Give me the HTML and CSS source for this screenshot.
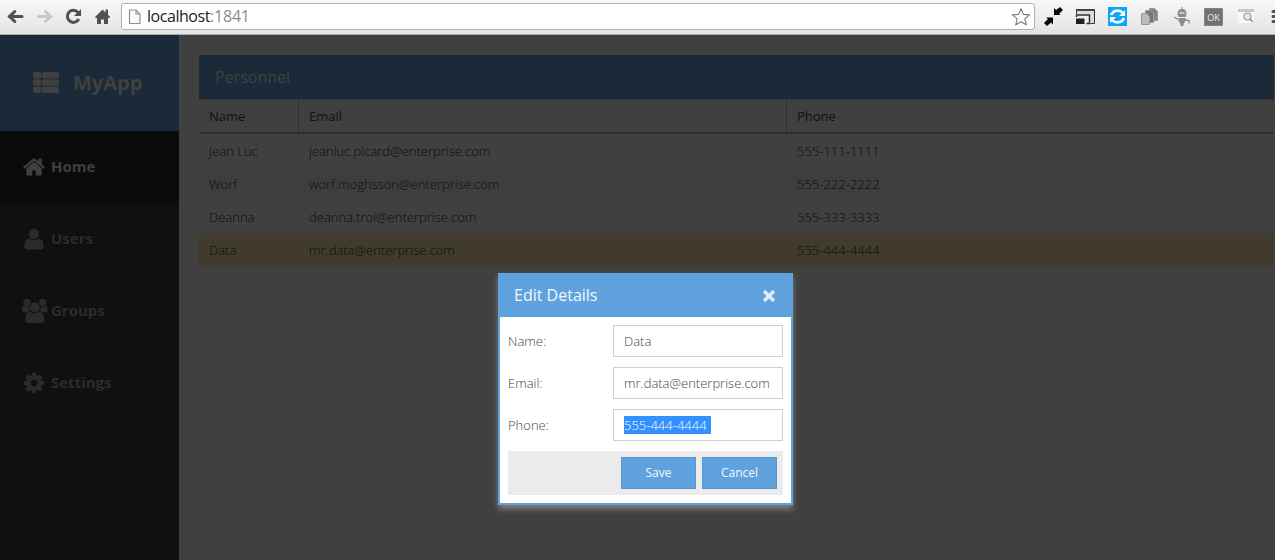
FILE: index.html
```html
<!DOCTYPE html>
<html lang="en">
<head>
<meta charset="utf-8">
<title>MyApp</title>
<link rel="stylesheet" href="styles.css">
</head>
<body>
<header class="toolbar">
  <svg class="nav-icons" width="121" height="34" viewBox="0 0 121 34">
    <g fill="none" stroke-width="3">
      <path d="M9.5 16.5H22" stroke="#505050" stroke-linecap="round"/><path d="M14.8 11.500L9.5 16.5l5.300 5" stroke="#505050" stroke-linecap="round"/>
      <path d="M38.500 16.500H50M45.500 11.500l5.300 5-5.300 5" stroke="#c8c8c8" stroke-linecap="round"/>
      <path d="M78 12.500A6 6 0 1 0 78.800 19" stroke="#505050"/>
    </g>
    <path d="M81 9v7h-7z" fill="#505050"/>
    <path d="M95 17l7.500-7.500 3 3V9.500h2.500v5.300l2.200 2.200-1 1H108v6h-4v-4.500h-3V24h-4v-6h-1.500z" fill="#505050"/>
  </svg>
  <div class="address">
    <svg width="14" height="18" viewBox="0 0 14 18"><path d="M1.500 2H8l4 4v9.500H1.500zM8 2v4h4" fill="#fafafa" stroke="#909090" stroke-width="1.200"/></svg>
    <span class="url">localhost<span class="port">:1841</span></span>
    <svg class="star" width="20" height="20" viewBox="0 0 20 20"><path d="M10 1.700l2.400 5.700 6.100.5-4.700 4 1.500 6L10 14.700l-5.300 3.200 1.500-6-4.700-4 6.100-.5z" fill="#fff" stroke="#777" stroke-width="1.100" stroke-linejoin="round"/></svg>
  </div>
  <svg class="extensions" width="240" height="34" viewBox="0 0 240 34">
    <g fill="#080808"><path d="M19 15v-7l2 2 4-3 3 3-4 4 2 1zM18 17.500v7l-2-2-4 3.500-3-3 4-4-2-1.500z"/></g>
    <path d="M41.500 14.500v-5h18v14h-4" fill="none" stroke="#303030"/><path d="M41 9h19v2H41z" fill="#444"/><path d="M42 11h17v12h-3v-9H42z" fill="#ddd"/><path d="M41.500 15h13v8.500h-3M41.500 15v2" fill="none" stroke="#303030" stroke-width="1.500"/><path d="M41 18.500h8.500v5.500H41z" fill="#202020"/>
    <path d="M73 7h19v19H73z" fill="#0ba5fc"/><path d="M76 15a7 6.500 0 0 1 12-2M89 18a7 6.500 0 0 1-12 2" fill="none" stroke="#fff" stroke-width="2.600"/><path d="M90 10v6h-6zM75 23v-6h6z" fill="#fff"/>
    <g stroke="#999"><path d="M114.500 8.500h5l3 3v9h-8z" fill="#858585"/><path d="M110.500 10.500h5l3 3v9h-8z" fill="#777"/><path d="M106.500 13.500h5l3 3v8h-8z" fill="#bbb"/></g>
    <g fill="#8c8c8c"><path d="M146.500 7h1v3h-1z"/><path d="M142.500 14q0-5 4.500-5t4.500 5z"/><path d="M142.500 14h9l-1 3h-7zM143.500 18h7v3l-2 3v2h-3v-2l-2-3z"/><path d="M139 17l4 2.500M150 20l4 .5v3" fill="none" stroke="#8c8c8c" stroke-width="1.300"/></g><path d="M144.500 13h5" stroke="#ddd" stroke-width="1.500"/>
    <path d="M169.500 8.500h18v17h-18z" fill="#727272" stroke="#858585"/><text x="178.500" y="20.500" text-anchor="middle" class="ok">OK</text>
    <path d="M203 10h16v13h-16z" fill="#f8f8f8"/><path d="M203 9h16v3h-16z" fill="#c6c6c6"/><circle cx="212.500" cy="16.500" r="3.500" fill="#e8e8e8" stroke="#999" stroke-width="1.200"/><path d="M215 19l3 3" stroke="#909090" stroke-width="1.500"/>
    <path d="M238 11.500h5M238 16.500h5M238 21.500h5" stroke="#505050" stroke-width="3" stroke-linecap="round"/>
  </svg>
</header>
<div class="app">
  <nav class="sidebar">
    <div class="brand"><svg width="26" height="22" viewBox="0 0 26 22" fill="#404040"><rect width="8.300" height="6.500" rx="1.700"/><rect x="9" width="17" height="6.500" rx="1.700"/><rect y="7.200" width="8.300" height="6.500" rx="1.700"/><rect x="9" y="7.200" width="17" height="6.500" rx="1.700"/><rect y="14.400" width="8.300" height="6.500" rx="1.700"/><rect x="9" y="14.400" width="17" height="6.500" rx="1.700"/></svg><span>MyApp</span></div>
    <a class="item active"><svg viewBox="0 0 1792 1792"><path d="M1472 992v480q0 26-19 45t-45 19h-384v-384h-256v384h-384q-26 0-45-19t-19-45v-480q0-1 .5-3t.5-3l575-474 575 474q1 2 1 6zm223-69l-62 74q-8 9-21 11h-3q-13 0-21-7l-692-577-692 577q-12 8-24 7-13-2-21-11l-62-74q-8-10-7-23.500t11-21.500l719-599q32-26 76-26t76 26l244 204v-195q0-14 9-23t23-9h192q14 0 23 9t9 23v408l219 182q10 8 11 21.500t-7 23.500z"/></svg>Home</a>
    <a class="item"><svg viewBox="0 0 24 24"><circle cx="12" cy="7" r="5.200"/><path d="M7.300 11.400q4.700 3.600 9.400 0Q21.600 12 21.600 19q0 3.500-3 3.500H5.400q-3 0-3-3.500 0-7 4.900-7.600z"/></svg>Users</a>
    <a class="item"><svg class="wide" viewBox="0 0 26 26"><circle cx="5" cy="4.300" r="3.600"/><circle cx="20.700" cy="4.300" r="3.600"/><path d="M3 7.500q2 1.500 4 .7-.3 3 1.600 5Q6 13 5 14.500H2q-2 0-2-2Q0 7 3 7.500zM22.700 7.500q-2 1.500-4 .7.300 3-1.600 5 2.600-.2 3.600 1.300h3q2 0 2-2 0-5.500-3-5z"/><circle cx="12.800" cy="9.400" r="5"/><path d="M8.200 13.600q4.600 3.500 9.200 0Q22 14 22.300 21.500q0 3.500-3 3.500h-13q-3 0-3-3.500Q3.500 14 8.200 13.600z"/></svg>Groups</a>
    <a class="item"><svg viewBox="0 0 1792 1792"><path d="M1152 896q0-106-75-181t-181-75-181 75-75 181 75 181 181 75 181-75 75-181zm512-109v222q0 12-8 23t-20 13l-185 28q-19 54-39 91 35 50 107 138 10 12 10 25t-9 23q-27 37-99 108t-94 71q-12 0-26-9l-138-108q-44 23-91 38-16 136-29 186-7 28-36 28h-222q-14 0-24.500-8.500t-11.500-21.500l-28-184q-49-16-90-37l-141 107q-10 9-25 9-14 0-25-11-126-114-165-168-7-10-7-23 0-12 8-23 15-21 51-66.500t54-70.500q-27-50-41-99l-183-27q-13-2-21-12.500t-8-23.500v-222q0-12 8-23t19-13l186-28q14-46 39-92-40-57-107-138-10-12-10-24 0-10 9-23 26-36 98.500-107.500t94.500-71.500q13 0 26 10l138 107q44-23 91-38 16-136 29-186 7-28 36-28h222q14 0 24.500 8.500t11.500 21.500l28 184q49 16 90 37l142-107q9-9 24-9 13 0 25 10 129 119 165 170 7 8 7 22 0 12-8 23-15 21-51 66.500t-54 70.500q26 50 41 98l183 28q13 2 21 12.500t8 23.500z"/></svg>Settings</a>
  </nav>
  <main class="content">
    <h1 class="panel-title">Personnel</h1>
    <div class="row head"><span>Name</span><span>Email</span><span>Phone</span></div>
    <div class="row"><span>Jean Luc</span><span>jeanluc.picard@enterprise.com</span><span>555-111-1111</span></div>
    <div class="row alt"><span>Worf</span><span>worf.moghsson@enterprise.com</span><span>555-222-2222</span></div>
    <div class="row"><span>Deanna</span><span>deanna.troi@enterprise.com</span><span>555-333-3333</span></div>
    <div class="row selected"><span>Data</span><span>mr.data@enterprise.com</span><span>555-444-4444</span></div>
  </main>
</div>
<section class="dialog">
  <div class="dialog-head"><span>Edit Details</span><svg width="12" height="12" viewBox="0 0 12 12"><path d="M2.300 2.300l7.400 7.400M9.700 2.300L2.300 9.700" stroke="#dfecf8" stroke-width="3.500" stroke-linecap="square"/></svg></div>
  <div class="form">
    <div class="field"><label>Name:</label><div class="input">Data</div></div>
    <div class="field"><label>Email:</label><div class="input">mr.data@enterprise.com</div></div>
    <div class="field"><label>Phone:</label><div class="input"><span class="marked">555-444-4444</span></div></div>
    <div class="actions"><button>Save</button><button>Cancel</button></div>
  </div>
</section>
</body>
</html>
```
FILE: styles.css
```css
* { box-sizing: border-box; }
body { margin: 0; width: 1275px; height: 560px; overflow: hidden; display: flex; flex-direction: column; position: relative; background: #404040; font: 300 13px "Open Sans", sans-serif; }
.toolbar { height: 35px; flex: none; display: flex; background: linear-gradient(#f7f7f7, #e4e4e4); border-bottom: 1px solid #aaa; }
.toolbar svg { flex: none; }
.address { width: 914px; height: 27px; margin-top: 3px; border: 1px solid #b0b0b0; border-radius: 3px; background: #fff; display: flex; align-items: center; padding: 0 3px 0 6px; }
.url { margin: -2px 0 0 5px; font-size: 16px; letter-spacing: -0.45px; font-weight: 400; line-height: 24px; color: #1c1c1c; }
.port { color: #8b8b8b; letter-spacing: -0.2px; }
.star { margin-left: auto; }
.ok { font: 400 9px "Open Sans", sans-serif; fill: #eee; }
.app { flex: 1; display: flex; }
.sidebar { width: 179px; background: #101010; flex: none; }
.brand { height: 96px; background: #1a2a38; color: #404040; display: flex; align-items: center; padding: 0 0 2px 33px; gap: 14px; font-size: 20px; font-weight: 700; }
.brand svg { margin-top: 1px; }
.item { height: 72px; display: flex; align-items: center; padding: 0 0 2px 22px; gap: 5px; font-size: 15px; font-weight: 700; color: #2b2b2b; fill: #2b2b2b; }
.item svg { width: 24px; height: 24px; margin-top: 2px; }
.item .wide { width: 26px; height: 26px; margin-right: -2px; }
.item.active { background: #0b0b0b; color: #404040; fill: #404040; }
.content { flex: 1; padding: 20px 1px 0 20px; }
.panel-title { margin: 0; height: 44px; background: #1a2a38; color: #404040; font-size: 16px; font-weight: 400; line-height: 44px; padding-left: 16px; }
.row { display: grid; grid-template-columns: 100px 488px 1fr; height: 33px; line-height: 32px; color: #0c0c0c; border-bottom: 1px solid #3b3b3b; }
.row span { padding-left: 10px; }
.row.head { height: 35px; margin-bottom: 1px; line-height: 33px; font-weight: 400; color: #101010; border-top: 1px solid #343434; border-bottom: 2px solid #303030; }
.head span + span { border-left: 1px solid #303030; padding-left: 10px; }
.head span { margin-left: -1px; padding-left: 11px; }
.row.alt { background: #3e3e3e; }
.row.selected { background: #403b2d; }
.dialog { position: absolute; left: 498px; top: 273px; width: 295px; height: 232px; border: 2px solid #5fa2dd; background: #fff; box-shadow: 0 4px 6px #808080; color: #444; }
.dialog-head { height: 42px; background: #5fa2dd; color: #f3f8fd; display: flex; align-items: center; justify-content: space-between; padding: 0 16px 2px 14px; font-size: 16px; font-weight: 400; }
.dialog-head svg { margin-top: 2px; }
.form { padding: 8px; display: flex; flex-direction: column; gap: 10px; }
.field { display: flex; justify-content: space-between; line-height: 32px; }
.input { width: 170px; height: 32px; border: 1px solid #cfcfcf; padding-left: 10px; line-height: 31px; }
.marked { background: #3390ff; color: #fff; padding-right: 4px; }
.actions { height: 44px; background: #ebebeb; display: flex; justify-content: flex-end; gap: 6px; padding: 6px; }
.actions button { width: 75px; height: 32px; padding: 0 0 2px; border: 1px solid #5796cf; background: #5fa2dd; color: #f3f8fd; font: 400 12px "Open Sans", sans-serif; }
```
